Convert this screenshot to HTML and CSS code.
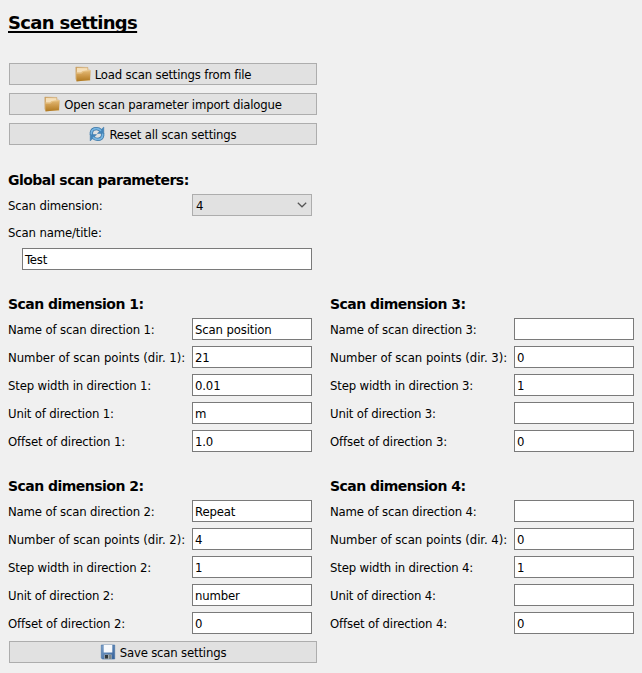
FILE: index.html
```html
<!DOCTYPE html>
<html lang="en">
<head>
<meta charset="utf-8">
<title>Scan settings</title>
<link rel="stylesheet" href="styles.css">
</head>
<body>
<svg class="defs" width="0" height="0" aria-hidden="true">
  <defs>
    <linearGradient id="front" x1="0" y1="0" x2="0" y2="1"><stop offset="0" stop-color="#e3bb78"/><stop offset=".5" stop-color="#cc9848"/><stop offset="1" stop-color="#ae781f"/></linearGradient>
    <linearGradient id="back" x1="0" y1="0" x2="1" y2="1"><stop offset="0" stop-color="#cda365"/><stop offset="1" stop-color="#f6dfb5"/></linearGradient>
    <linearGradient id="disk" x1="0" y1="0" x2="1" y2="1"><stop offset="0" stop-color="#7da3cc"/><stop offset="1" stop-color="#325f98"/></linearGradient>
    <symbol id="folder" viewBox="0 0 16 16">
      <path d="M.8 1 13 1.500V4h2v10.500H1.500L.8 13z" fill="url(#back)" stroke="#c49a5b" stroke-width=".4"/>
      <path d="M2 2 12.300 2.300V4.500L7 5.500 5.800 6.500H2z" fill="#f5dfb9"/>
      <path d="M1.300 6.800H6.500L8 4.900l7.600-.6-.7 9.700L1.500 15.500z" fill="url(#front)"/>
      <path d="M1.500 7.100H6.700L8.200 5.200l7-.6" fill="none" stroke="#f1d39d" stroke-width=".6"/>
    </symbol>
    <symbol id="refresh" viewBox="0 0 16 16">
      <path d="M2.400 9V6.500Q3 2.600 7.500 2.600q2.500 0 4.500 2M13.600 7v2.500q-.6 3.900-5.100 3.900-2.500 0-4.500-2" fill="none" stroke="#3b77a8" stroke-width="3.400"/>
      <path d="M14.800 1v6.400H8.400zM1.200 15V8.600h6.400z" fill="#4385ba" stroke="#3b77a8" stroke-width=".5"/>
      <path d="M2.400 8.500v-2Q3 2.600 7.500 2.600q2.500 0 4.500 2M13.600 7.500v2q-.6 3.900-5.100 3.900-2.500 0-4.500-2" fill="none" stroke="#78b5e1" stroke-width="1.700"/>
    </symbol>
    <symbol id="floppy" viewBox="0 0 16 16">
      <path d="M1.300 1h13.400v14H2.300l-1-1z" fill="url(#disk)" stroke="#416fa5" stroke-width=".6"/>
      <path d="M3.700 1h8.600v7.500H3.700z" fill="#f7f9fc"/>
      <path d="M4.300 10.500h7.400V15H4.300z" fill="#a6adb0"/>
      <path d="M5 11h3v3.500H5z" fill="#30383d"/>
      <path d="M9 11h2v4H9z" fill="#7c8789"/>
    </symbol>
  </defs>
</svg>
<main>
  <h1>Scan settings</h1>
  <div class="actions">
    <button><svg class="icon"><use href="#folder"/></svg><span>Load scan settings from file</span></button>
    <button><svg class="icon"><use href="#folder"/></svg><span>Open scan parameter import dialogue</span></button>
    <button><svg class="icon"><use href="#refresh"/></svg><span>Reset all scan settings</span></button>
  </div>
  <section class="global">
    <h2>Global scan parameters:</h2>
    <div class="row"><span>Scan dimension:</span><div class="select"><span>4</span><svg width="10" height="6" viewBox="0 0 10 6"><path d="M.8.8 5 4.800 9.200.8" fill="none" stroke="#555" stroke-width="1.200"/></svg></div></div>
    <div class="name-label">Scan name/title:</div>
    <div class="field wide">Test</div>
  </section>
  <div class="dimensions">
    <section>
      <h2>Scan dimension 1:</h2>
      <div class="row"><span>Name of scan direction 1:</span><div class="field">Scan position</div></div>
      <div class="row"><span class="loose">Number of scan points (dir. 1):</span><div class="field">21</div></div>
      <div class="row"><span>Step width in direction 1:</span><div class="field">0.01</div></div>
      <div class="row"><span>Unit of direction 1:</span><div class="field">m</div></div>
      <div class="row"><span>Offset of direction 1:</span><div class="field">1.0</div></div>
    </section>
    <section>
      <h2>Scan dimension 3:</h2>
      <div class="row"><span>Name of scan direction 3:</span><div class="field"></div></div>
      <div class="row"><span class="loose">Number of scan points (dir. 3):</span><div class="field">0</div></div>
      <div class="row"><span>Step width in direction 3:</span><div class="field">1</div></div>
      <div class="row"><span>Unit of direction 3:</span><div class="field"></div></div>
      <div class="row"><span>Offset of direction 3:</span><div class="field">0</div></div>
    </section>
    <section>
      <h2>Scan dimension 2:</h2>
      <div class="row"><span>Name of scan direction 2:</span><div class="field">Repeat</div></div>
      <div class="row"><span class="loose">Number of scan points (dir. 2):</span><div class="field">4</div></div>
      <div class="row"><span>Step width in direction 2:</span><div class="field">1</div></div>
      <div class="row"><span>Unit of direction 2:</span><div class="field">number</div></div>
      <div class="row"><span>Offset of direction 2:</span><div class="field">0</div></div>
    </section>
    <section>
      <h2>Scan dimension 4:</h2>
      <div class="row"><span>Name of scan direction 4:</span><div class="field"></div></div>
      <div class="row"><span class="loose">Number of scan points (dir. 4):</span><div class="field">0</div></div>
      <div class="row"><span>Step width in direction 4:</span><div class="field">1</div></div>
      <div class="row"><span>Unit of direction 4:</span><div class="field"></div></div>
      <div class="row"><span>Offset of direction 4:</span><div class="field">0</div></div>
    </section>
  </div>
  <div class="actions save">
    <button><svg class="icon"><use href="#floppy"/></svg><span>Save scan settings</span></button>
  </div>
</main>
</body>
</html>
```
FILE: styles.css
```css
* { box-sizing: border-box; }
body {
  margin: 0;
  background: #f0f0f0;
  color: #000;
  font: 13px/21px "DejaVu Sans Condensed", "DejaVu Sans", sans-serif;
  font-stretch: condensed;
  letter-spacing: -0.15px;
}
.defs { display: block; }
main { padding: 10px 8px 0; }
h1, h2 { font-family: "DejaVu Sans", sans-serif; font-stretch: normal; }
h1 {
  margin: 0 0 27px;
  font-size: 18px;
  line-height: 26px;
  letter-spacing: -0.65px;
  text-decoration: underline;
  text-decoration-thickness: 2px;
  text-underline-offset: 2px;
  text-decoration-skip-ink: none;
}
h2 { margin: 0; font-size: 14px; line-height: 20px; letter-spacing: -0.53px; }
.actions { display: flex; flex-direction: column; gap: 8px; width: 308px; margin-left: 1px; }
button {
  display: flex;
  align-items: center;
  justify-content: center;
  gap: 4px;
  height: 22px;
  padding: 0;
  border: 1px solid #adadad;
  background: #e1e1e1;
  color: inherit;
  font: inherit;
  letter-spacing: -0.18px;
}
button span, .select span { align-self: flex-start; }
.icon { width: 16px; height: 16px; }
.global { width: 304px; margin-top: 25px; }
.global .row { margin-top: 4px; }
.row { display: flex; justify-content: space-between; align-items: flex-end; height: 22px; white-space: nowrap; }
.loose { letter-spacing: -0.04px; }
.select, .field { width: 120px; height: 22px; flex: none; }
.select {
  display: flex;
  justify-content: space-between;
  align-items: center;
  padding: 0 4px 0 3px;
  border: 1px solid #adadad;
  background: #e1e1e1;
}
.field { padding: 0 2px; border: 1px solid #7a7a7a; background: #fff; }
.name-label { margin: 6px 0 5px; }
.wide { width: 290px; margin-left: 14px; }
.dimensions {
  display: grid;
  grid-template-columns: 304px 304px;
  column-gap: 18px;
  row-gap: 24px;
  margin-top: 24px;
}
.dimensions section { display: flex; flex-direction: column; gap: 6px; }
.dimensions h2 { margin-bottom: -2px; }
.save { margin-top: 7px; }
```
